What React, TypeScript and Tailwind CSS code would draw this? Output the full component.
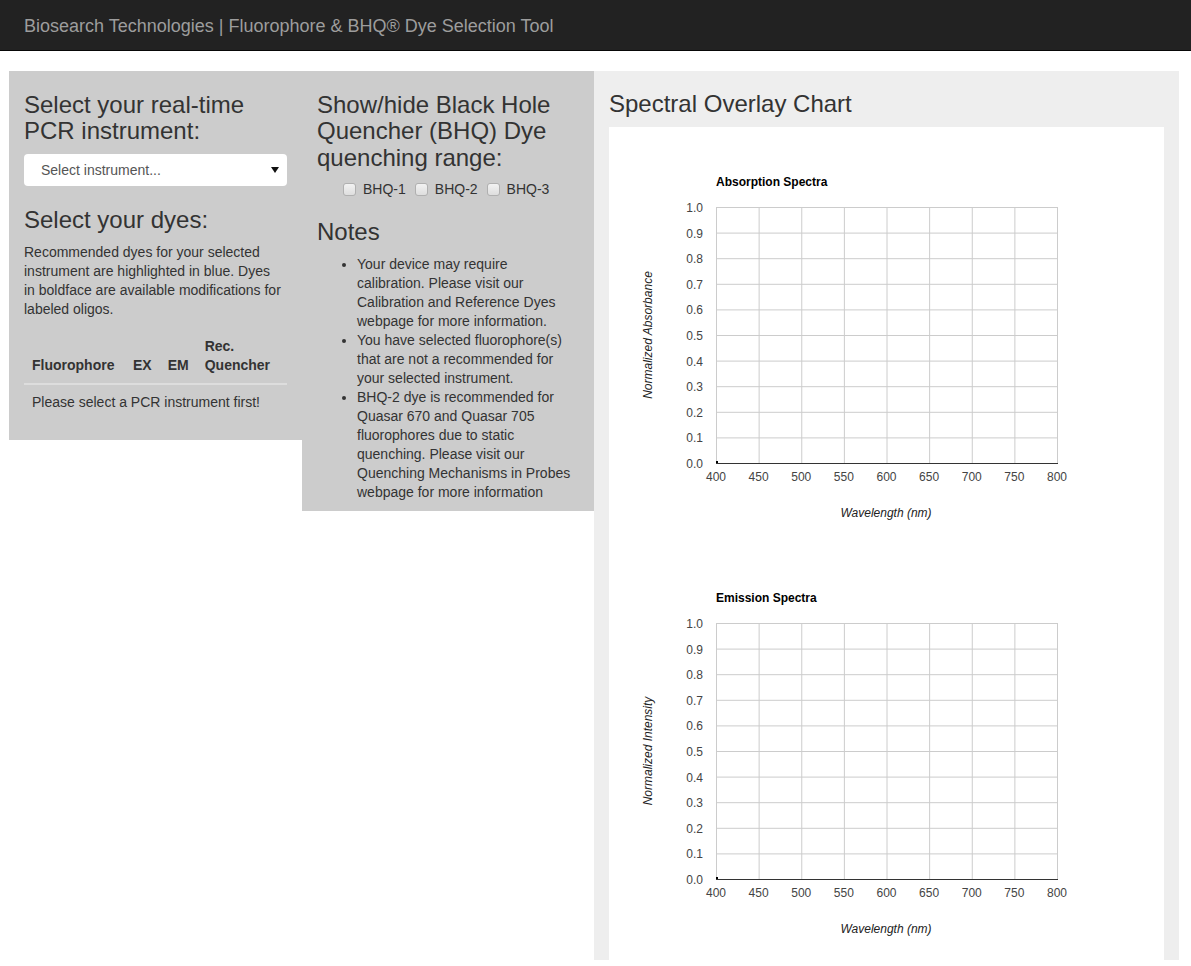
const FONT = "font-['Liberation_Sans',Arial,sans-serif]";

const notes = [
  "Your device may require calibration. Please visit our Calibration and Reference Dyes webpage for more information.",
  "You have selected fluorophore(s) that are not a recommended for your selected instrument.",
  "BHQ-2 dye is recommended for Quasar 670 and Quasar 705 fluorophores due to static quenching. Please visit our Quenching Mechanisms in Probes webpage for more information",
];

function Checkbox({ label }: { label: string }) {
  return (
    <label className="flex items-center gap-[7px]">
      <span className="inline-block h-[13px] w-[13px] rounded-[3px] border border-[#b0b0b0] bg-gradient-to-b from-[#f2f2f2] to-[#dedede]" />
      <span>{label}</span>
    </label>
  );
}

// plot geometry, in svg units
const L = 107;
const R = 448;
const T = 80;
const B = 336;
const xTicks = [400, 450, 500, 550, 600, 650, 700, 750, 800];
const yTicks = [0, 0.1, 0.2, 0.3, 0.4, 0.5, 0.6, 0.7, 0.8, 0.9, 1.0];

function SpectraChart({ title, yLabel }: { title: string; yLabel: string }) {
  const xPos = (i: number) => L + ((R - L) * i) / 8;
  const yPos = (i: number) => B - ((B - T) * i) / 10;
  return (
    <svg width={555} height={416} className="block" fontFamily="'Liberation Sans', Arial, sans-serif">
      <text x={L} y={59} fontSize={12} fontWeight="bold" fill="#000">
        {title}
      </text>
      {yTicks.map((v, i) => (
        <g key={v}>
          <line x1={L} x2={R} y1={yPos(i) + 0.5} y2={yPos(i) + 0.5} stroke="#cccccc" />
          <text x={94} y={yPos(i) + 5} fontSize={12} textAnchor="end" fill="#444">
            {v.toFixed(1)}
          </text>
        </g>
      ))}
      {xTicks.map((v, i) => (
        <g key={v}>
          <line x1={xPos(i) + 0.5} x2={xPos(i) + 0.5} y1={T} y2={B} stroke="#cccccc" />
          <text x={xPos(i)} y={354} fontSize={12} textAnchor="middle" fill="#444">
            {v}
          </text>
        </g>
      ))}
      <line x1={L} x2={R + 1} y1={B + 0.5} y2={B + 0.5} stroke="#333" />
      <rect x={L} y={B - 2} width={2} height={2} fill="#000" />
      <text x={277} y={390} fontSize={12} fontStyle="italic" textAnchor="middle" fill="#222">
        Wavelength (nm)
      </text>
      <text
        x={0}
        y={0}
        fontSize={12}
        fontStyle="italic"
        textAnchor="middle"
        fill="#222"
        transform={`translate(43 ${(T + B) / 2}) rotate(-90)`}
      >
        {yLabel}
      </text>
    </svg>
  );
}

export default function App() {
  return (
    <div className={`${FONT} min-h-[966px] bg-white text-[14px] text-[#333]`}>
      <header className="flex h-[51px] items-center border-b border-[#080808] bg-[#222] pl-[24px]">
        <span className="pt-[3px] text-[18px] text-[#9d9d9d]">
          Biosearch Technologies | Fluorophore &amp; BHQ® Dye Selection Tool
        </span>
      </header>

      <main className="ml-[9px] mt-[20px] flex w-[1170px] items-start">
        <section className="w-[293px] bg-[#cccccc] px-[15px]">
          <h3 className="mb-[9px] mt-[21px] text-[24px] leading-[26.4px]">
            Select your real-time PCR instrument:
          </h3>
          <div className="flex h-[32px] items-center justify-between rounded-[4px] bg-white pl-[17px] pr-[8px] pt-[2px] text-[#555]">
            <span>Select instrument...</span>
            <svg width="8" height="6" viewBox="0 0 8 6" className="-mt-[2px]">
              <polygon points="0,0 8,0 4,6" fill="#111" />
            </svg>
          </div>
          <h3 className="mb-[10px] mt-[21px] text-[24px] leading-[26.4px]">Select your dyes:</h3>
          <p className="mb-[10px] pr-[4px] leading-[19px]">
            Recommended dyes for your selected instrument are highlighted in blue. Dyes in boldface
            are available modifications for labeled oligos.
          </p>
          <table className="mb-[20px] mt-[2px] w-full border-collapse leading-[19px]">
            <thead>
              <tr className="border-b-2 border-[#dddddd] text-left align-bottom font-bold">
                <th className="w-[101px] p-[8px]">Fluorophore</th>
                <th className="w-[34px] p-[8px]">EX</th>
                <th className="w-[36px] p-[8px]">EM</th>
                <th className="p-[8px]">
                  Rec.
                  <br />
                  Quencher
                </th>
              </tr>
            </thead>
            <tbody>
              <tr>
                <td colSpan={4} className="p-[8px]">
                  Please select a PCR instrument first!
                </td>
              </tr>
            </tbody>
          </table>
        </section>

        <section className="w-[292px] bg-[#cccccc] px-[15px]">
          <h3 className="mb-[8px] mt-[21px] text-[24px] leading-[26.4px]">
            Show/hide Black Hole Quencher (BHQ) Dye quenching range:
          </h3>
          <div className="flex h-[20px] items-center gap-[9px] pl-[26px]">
            <Checkbox label="BHQ-1" />
            <Checkbox label="BHQ-2" />
            <Checkbox label="BHQ-3" />
          </div>
          <h3 className="mb-[9px] mt-[20px] text-[24px] leading-[26.4px]">Notes</h3>
          <ul className="mb-[9px] list-disc pl-[40px] leading-[19px]">
            {notes.map((n) => (
              <li key={n}>{n}</li>
            ))}
          </ul>
        </section>

        <section className="w-[585px] bg-[#eeeeee] px-[15px]">
          <h3 className="mb-[10px] mt-[20px] text-[24px] leading-[26.4px]">Spectral Overlay Chart</h3>
          <div className="bg-white pb-[1px]">
            <SpectraChart title="Absorption Spectra" yLabel="Normalized Absorbance" />
            <SpectraChart title="Emission Spectra" yLabel="Normalized Intensity" />
          </div>
        </section>
      </main>
    </div>
  );
}
